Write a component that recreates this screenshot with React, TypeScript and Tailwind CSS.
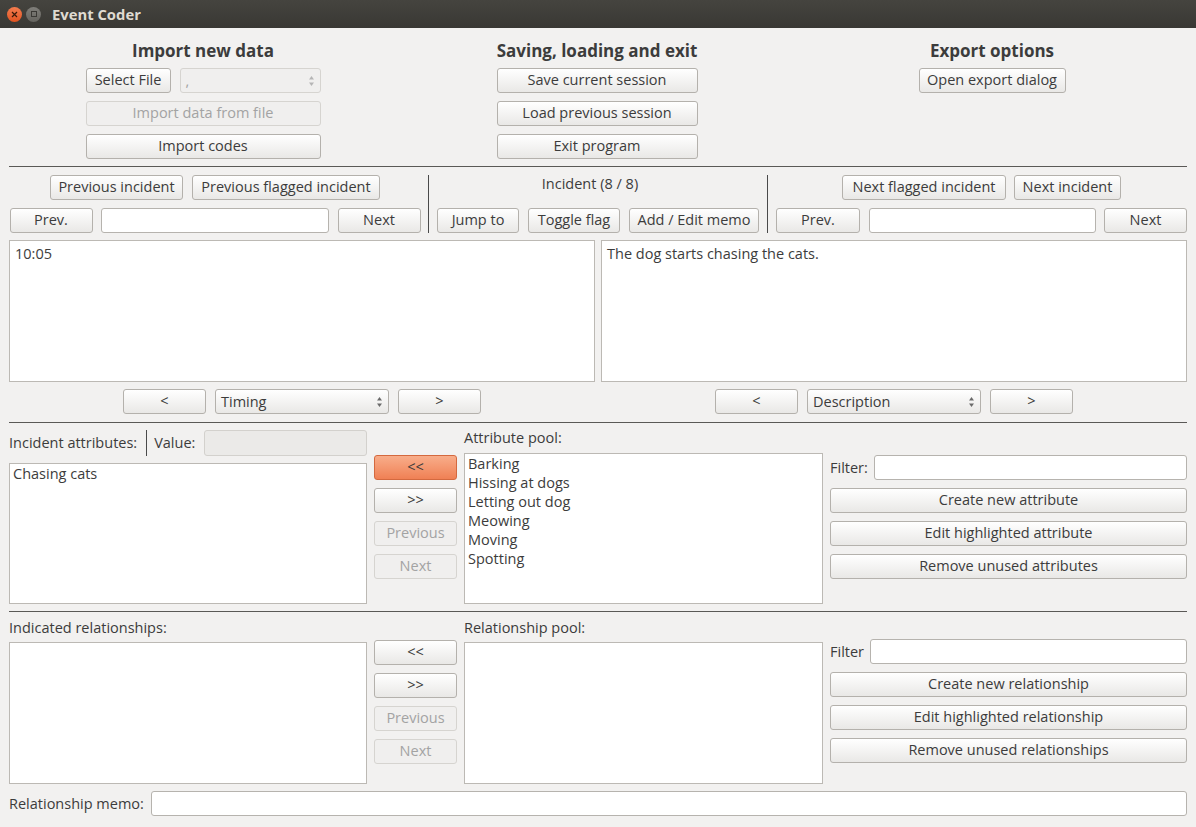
import React from "react";

const F = { fontFamily: '"Open Sans", "Noto Sans", sans-serif' };

function Btn({
  children,
  w,
  disabled,
  orange,
  h = "h-[25px]",
}: {
  children: React.ReactNode;
  w: string;
  disabled?: boolean;
  orange?: boolean;
  h?: string;
}) {
  let cls =
    "bg-gradient-to-b from-[#ffffff] to-[#e9e8e6] border-[#b4b1ac] text-[#3c3c3c]";
  if (disabled) cls = "bg-[#f0efee] border-[#d6d4d0] text-[#a3a3a3]";
  if (orange)
    cls = "bg-gradient-to-b from-[#f8ad8a] to-[#ef8054] border-[#d4693f] text-[#3c3c3c]";
  return (
    <div
      className={`${w} ${h} ${cls} shrink-0 flex items-center justify-center rounded-[3px] border text-[14.5px] leading-none whitespace-nowrap`}
    >
      {children}
    </div>
  );
}

function Input({ w, h = "h-[25px]", disabled }: { w: string; h?: string; disabled?: boolean }) {
  return (
    <div
      className={`${w} ${h} shrink-0 rounded-[3px] border ${
        disabled ? "bg-[#ebeae8] border-[#d3d1cd]" : "bg-white border-[#b6b3ae]"
      }`}
    />
  );
}

function Arrows({ color = "#555" }: { color?: string }) {
  return (
    <svg width="7" height="12" viewBox="0 0 7 12">
      <path d="M3.5 1 L6 4.5 L1 4.5 Z" fill={color} />
      <path d="M3.5 11 L6 7.5 L1 7.5 Z" fill={color} />
    </svg>
  );
}

function Combo({ w, text, disabled }: { w: string; text: string; disabled?: boolean }) {
  return (
    <div
      className={`${w} h-[25px] shrink-0 rounded-[3px] border flex items-center justify-between pl-[5px] pr-[5px] text-[14.5px] ${
        disabled
          ? "bg-[#f0efee] border-[#d6d4d0] text-[#a3a3a3]"
          : "bg-gradient-to-b from-[#ffffff] to-[#e9e8e6] border-[#b4b1ac] text-[#3c3c3c]"
      }`}
    >
      <span>{text}</span>
      <Arrows color={disabled ? "#b5b5b5" : "#6a6a6a"} />
    </div>
  );
}

function HR() {
  return <div className="h-px bg-[#5a5956] w-full shrink-0" />;
}

function VSep({ h }: { h: string }) {
  return <div className={`w-px ${h} bg-[#4a4a4a] shrink-0`} />;
}

function ListBox({ w, h, items = [] }: { w: string; h: string; items?: string[] }) {
  return (
    <div
      className={`${w} ${h} shrink-0 bg-white border border-[#bcb9b4] px-[3px] pt-0 text-[14.5px] text-[#3c3c3c] leading-[19px]`}
    >
      {items.map((i) => (
        <div key={i}>{i}</div>
      ))}
    </div>
  );
}

export default function App() {
  return (
    <div
      className="w-[1196px] h-[827px] bg-[#f2f1f0] flex flex-col overflow-hidden text-[#3c3c3c] text-[14.5px]"
      style={F}
    >
      {/* Title bar */}
      <div className="h-[28px] shrink-0 bg-gradient-to-b from-[#45443f] to-[#393834] flex items-center pl-[7px]">
        <div className="w-[15px] h-[15px] rounded-full bg-gradient-to-b from-[#f37c4e] to-[#e2531f] flex items-center justify-center">
          <svg width="7" height="7" viewBox="0 0 7 7">
            <path d="M1 1 L6 6 M6 1 L1 6" stroke="#3a1a0a" strokeWidth="1.2" />
          </svg>
        </div>
        <div className="w-[15px] h-[15px] rounded-full bg-gradient-to-b from-[#7f7e79] to-[#65645f] ml-[4px] flex items-center justify-center">
          <div className="w-[6px] h-[6px] border border-[#3a3935]" />
        </div>
        <div className="ml-[11px] text-[14.8px] font-bold text-[#dfdbd2]">Event Coder</div>
      </div>

      <div className="flex flex-col px-[9px] flex-1">
        {/* Top section */}
        <div className="flex pt-[11px] pb-[7px]">
          <div className="w-[388px] flex flex-col items-center">
            <div className="h-[24px] text-[17px] font-bold leading-[24px] text-[#3c3c3c]">Import new data</div>
            <div className="mt-[5px] flex flex-col gap-[8px] w-[235px]">
              <div className="flex gap-[9px]">
                <Btn w="w-[85px]">Select File</Btn>
                <Combo w="w-[141px]" text="," disabled />
              </div>
              <Btn w="w-[235px]" disabled>
                Import data from file
              </Btn>
              <Btn w="w-[235px]">Import codes</Btn>
            </div>
          </div>
          <div className="w-[400px] flex flex-col items-center">
            <div className="h-[24px] text-[17px] font-bold leading-[24px]">Saving, loading and exit</div>
            <div className="mt-[5px] flex flex-col gap-[8px]">
              <Btn w="w-[201px]">Save current session</Btn>
              <Btn w="w-[201px]">Load previous session</Btn>
              <Btn w="w-[201px]">Exit program</Btn>
            </div>
          </div>
          <div className="flex-1 flex flex-col items-center">
            <div className="h-[24px] text-[17px] font-bold leading-[24px]">Export options</div>
            <div className="mt-[5px] flex flex-col gap-[8px]">
              <Btn w="w-[147px]">Open export dialog</Btn>
            </div>
          </div>
        </div>
        <HR />

        {/* Navigation */}
        <div className="flex items-start pt-[8px]">
          <div className="w-[412px] flex flex-col items-center gap-[8px]">
            <div className="flex gap-[9px]">
              <Btn w="w-[133px]">Previous incident</Btn>
              <Btn w="w-[188px]">Previous flagged incident</Btn>
            </div>
            <div className="flex gap-[8px] w-[411px] justify-between">
              <Btn w="w-[83px]">Prev.</Btn>
              <Input w="w-[228px]" />
              <Btn w="w-[83px]">Next</Btn>
            </div>
          </div>
          <div className="ml-[7px] mr-[8px]">
            <VSep h="h-[58px]" />
          </div>
          <div className="w-[322px] flex flex-col items-center">
            <div className="h-[25px] text-[14.5px] leading-[17px] pr-[16px]">Incident (8 / 8)</div>
            <div className="mt-[8px] flex gap-[9px]">
              <Btn w="w-[82px]">Jump to</Btn>
              <Btn w="w-[92px]">Toggle flag</Btn>
              <Btn w="w-[130px]">Add / Edit memo</Btn>
            </div>
          </div>
          <div className="ml-[8px] mr-[8px]">
            <VSep h="h-[58px]" />
          </div>
          <div className="flex-1 flex flex-col items-center gap-[8px]">
            <div className="flex gap-[8px]">
              <Btn w="w-[164px]">Next flagged incident</Btn>
              <Btn w="w-[107px]">Next incident</Btn>
            </div>
            <div className="flex w-full justify-between">
              <Btn w="w-[84px]">Prev.</Btn>
              <Input w="w-[227px]" />
              <Btn w="w-[83px]">Next</Btn>
            </div>
          </div>
        </div>

        {/* Text areas */}
        <div className="flex gap-[6px] mt-[7px]">
          <div className="flex-1 flex flex-col items-center">
            <div className="w-full h-[142px] bg-white border border-[#bcb9b4] px-[5px] pt-[3px] text-[14.5px] leading-[19px]">
              10:05
            </div>
            <div className="flex gap-[9px] mt-[7px]">
              <Btn w="w-[83px]" h="h-[25px]">&lt;</Btn>
              <Combo w="w-[174px]" text="Timing" />
              <Btn w="w-[83px]" h="h-[25px]">&gt;</Btn>
            </div>
          </div>
          <div className="flex-1 flex flex-col items-center">
            <div className="w-full h-[142px] bg-white border border-[#bcb9b4] px-[5px] pt-[3px] text-[14.5px] leading-[19px]">
              The dog starts chasing the cats.
            </div>
            <div className="flex gap-[9px] mt-[7px]">
              <Btn w="w-[83px]">&lt;</Btn>
              <Combo w="w-[174px]" text="Description" />
              <Btn w="w-[83px]">&gt;</Btn>
            </div>
          </div>
        </div>

        <div className="mt-[8px]">
          <HR />
        </div>

        {/* Attributes */}
        <div className="flex mt-[7px]">
          <div className="w-[358px] flex flex-col">
            <div className="flex items-center h-[26px]">
              <span>Incident attributes:</span>
              <div className="ml-[9px] mr-[7px]">
                <VSep h="h-[26px]" />
              </div>
              <span>Value:</span>
              <div className="ml-[9px] flex-1">
                <Input w="w-full" h="h-[26px]" disabled />
              </div>
            </div>
            <div className="mt-[7px]">
              <ListBox w="w-[358px]" h="h-[141px]" items={["Chasing cats"]} />
            </div>
          </div>
          <div className="ml-[7px] mt-[25px] flex flex-col gap-[8px]">
            <Btn w="w-[83px]" orange>
              &lt;&lt;
            </Btn>
            <Btn w="w-[83px]">&gt;&gt;</Btn>
            <Btn w="w-[83px]" disabled>
              Previous
            </Btn>
            <Btn w="w-[83px]" disabled>
              Next
            </Btn>
          </div>
          <div className="ml-[7px] flex flex-col">
            <div className="h-[16px] leading-[16px]">Attribute pool:</div>
            <div className="mt-[7px]">
              <ListBox
                w="w-[359px]"
                h="h-[151px]"
                items={["Barking", "Hissing at dogs", "Letting out dog", "Meowing", "Moving", "Spotting"]}
              />
            </div>
          </div>
          <div className="ml-[7px] flex-1 flex flex-col mt-[25px] gap-[8px]">
            <div className="flex items-center gap-[6px]">
              <span>Filter:</span>
              <div className="flex-1">
                <Input w="w-full" />
              </div>
            </div>
            <Btn w="w-full">Create new attribute</Btn>
            <Btn w="w-full">Edit highlighted attribute</Btn>
            <Btn w="w-full">Remove unused attributes</Btn>
          </div>
        </div>

        <div className="mt-[7px]">
          <HR />
        </div>

        {/* Relationships */}
        <div className="flex mt-[7px]">
          <div className="w-[358px] flex flex-col">
            <div className="h-[17px] leading-[17px]">Indicated relationships:</div>
            <div className="mt-[6px]">
              <ListBox w="w-[358px]" h="h-[142px]" />
            </div>
          </div>
          <div className="ml-[7px] mt-[21px] flex flex-col gap-[8px]">
            <Btn w="w-[83px]">&lt;&lt;</Btn>
            <Btn w="w-[83px]">&gt;&gt;</Btn>
            <Btn w="w-[83px]" disabled>
              Previous
            </Btn>
            <Btn w="w-[83px]" disabled>
              Next
            </Btn>
          </div>
          <div className="ml-[7px] flex flex-col">
            <div className="h-[17px] leading-[17px]">Relationship pool:</div>
            <div className="mt-[6px]">
              <ListBox w="w-[359px]" h="h-[142px]" />
            </div>
          </div>
          <div className="ml-[7px] flex-1 flex flex-col mt-[20px] gap-[8px]">
            <div className="flex items-center gap-[6px]">
              <span>Filter</span>
              <div className="flex-1">
                <Input w="w-full" />
              </div>
            </div>
            <Btn w="w-full">Create new relationship</Btn>
            <Btn w="w-full">Edit highlighted relationship</Btn>
            <Btn w="w-full">Remove unused relationships</Btn>
          </div>
        </div>

        {/* Memo */}
        <div className="flex items-center mt-[7px] gap-[7px]">
          <span>Relationship memo:</span>
          <div className="flex-1">
            <Input w="w-full" />
          </div>
        </div>
      </div>
    </div>
  );
}
